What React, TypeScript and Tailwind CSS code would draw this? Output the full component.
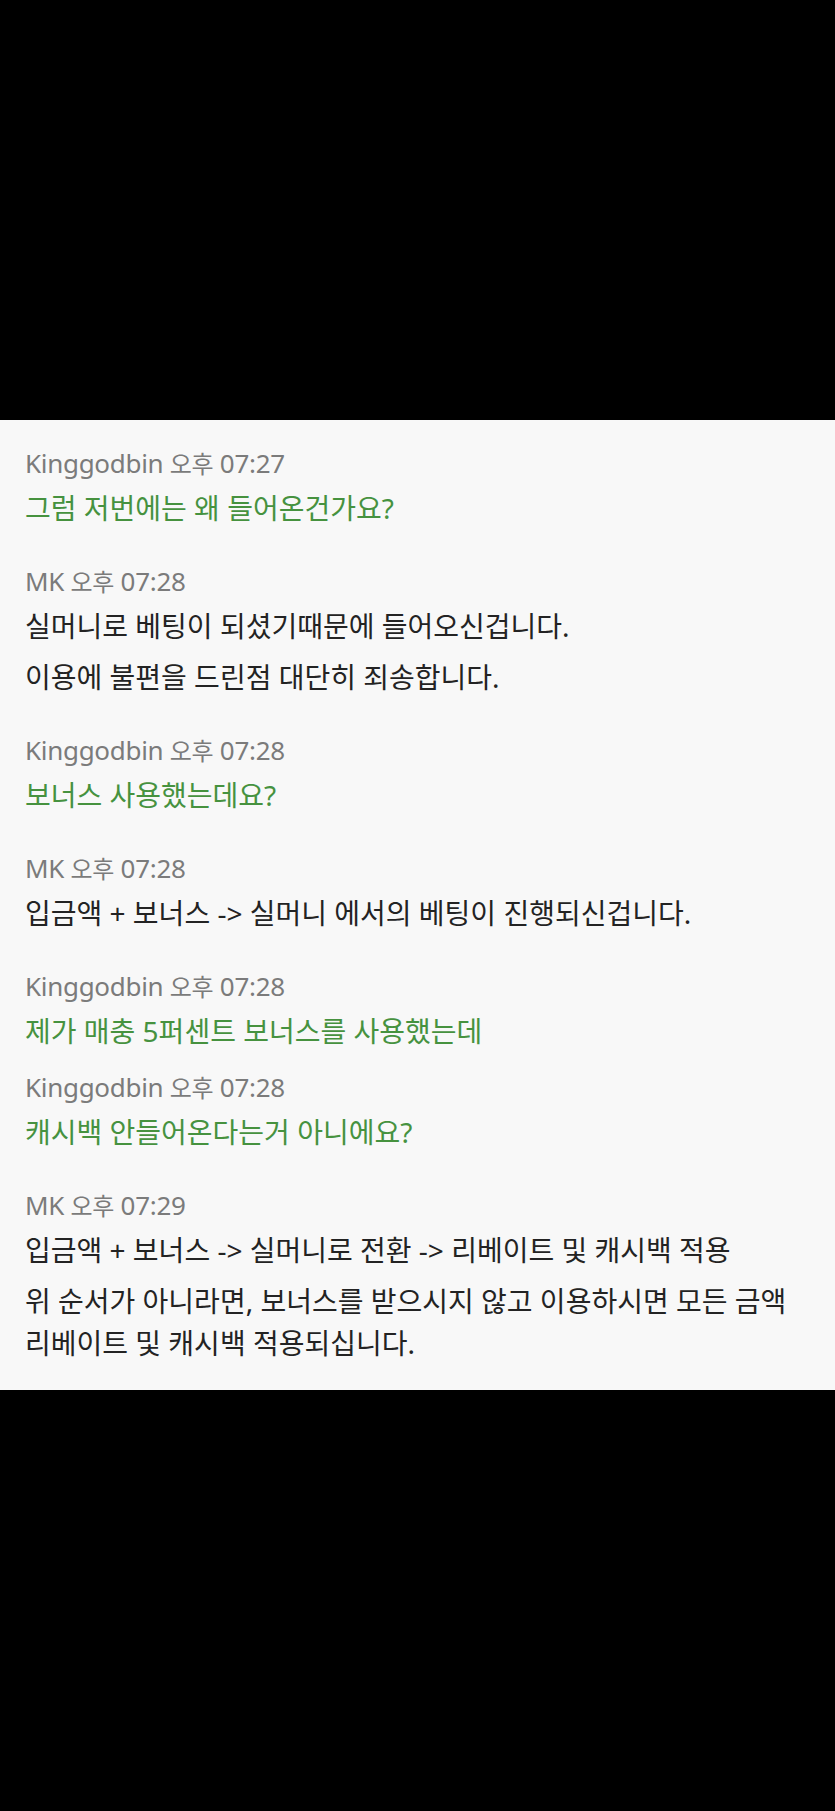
const chat = [
  {
    user: 'Kinggodbin',
    time: '07:27',
    mine: true,
    lines: ['그럼 저번에는 왜 들어온건가요?'],
  },
  {
    user: 'MK',
    time: '07:28',
    mine: false,
    lines: ['실머니로 베팅이 되셨기때문에 들어오신겁니다.', '이용에 불편을 드린점 대단히 죄송합니다.'],
  },
  {
    user: 'Kinggodbin',
    time: '07:28',
    mine: true,
    lines: ['보너스 사용했는데요?'],
  },
  {
    user: 'MK',
    time: '07:28',
    mine: false,
    lines: ['입금액 + 보너스 -> 실머니 에서의 베팅이 진행되신겁니다.'],
  },
  {
    user: 'Kinggodbin',
    time: '07:28',
    mine: true,
    lines: ['제가 매충 5퍼센트 보너스를 사용했는데'],
  },
  {
    user: 'Kinggodbin',
    time: '07:28',
    mine: true,
    lines: ['캐시백 안들어온다는거 아니에요?'],
  },
  {
    user: 'MK',
    time: '07:29',
    mine: false,
    lines: [
      '입금액 + 보너스 -> 실머니로 전환 -> 리베이트 및 캐시백 적용',
      '위 순서가 아니라면, 보너스를 받으시지 않고 이용하시면 모든 금액 리베이트 및 캐시백 적용되십니다.',
    ],
  },
]

export default function App() {
  return (
    <div
      className="min-h-screen bg-black flex flex-col"
      style={{ fontFamily: '"Noto Sans", "Noto Sans CJK KR", sans-serif' }}
    >
      {/* top dark area */}
      <div className="h-[420px]" />

      {/* chat log */}
      <div className="bg-[#f8f8f8] pl-[25px] pr-[20px] pt-[28px] pb-[26px] flex flex-col">
        {chat.map((m, i) => {
          const prev = chat[i - 1]
          const sameSender = prev && prev.user === m.user
          return (
            <div
              key={i}
              className={`flex flex-col gap-[9px] ${i === 0 ? '' : sameSender ? 'mt-[20px]' : 'mt-[37px]'}`}
            >
              <div className="h-[30px] leading-[30px] text-[26px] text-[#7b7b7b] tracking-[-0.3px]">
                {m.user} <span className="text-[24px]">오후</span> {m.time}
              </div>
              {m.lines.map((line, j) => (
                <p
                  key={j}
                  className={`text-[28px] leading-[42px] break-keep ${m.mine ? 'text-[#46923f]' : 'text-[#232323]'}`}
                >
                  {line}
                </p>
              ))}
            </div>
          )
        })}
      </div>
    </div>
  )
}
